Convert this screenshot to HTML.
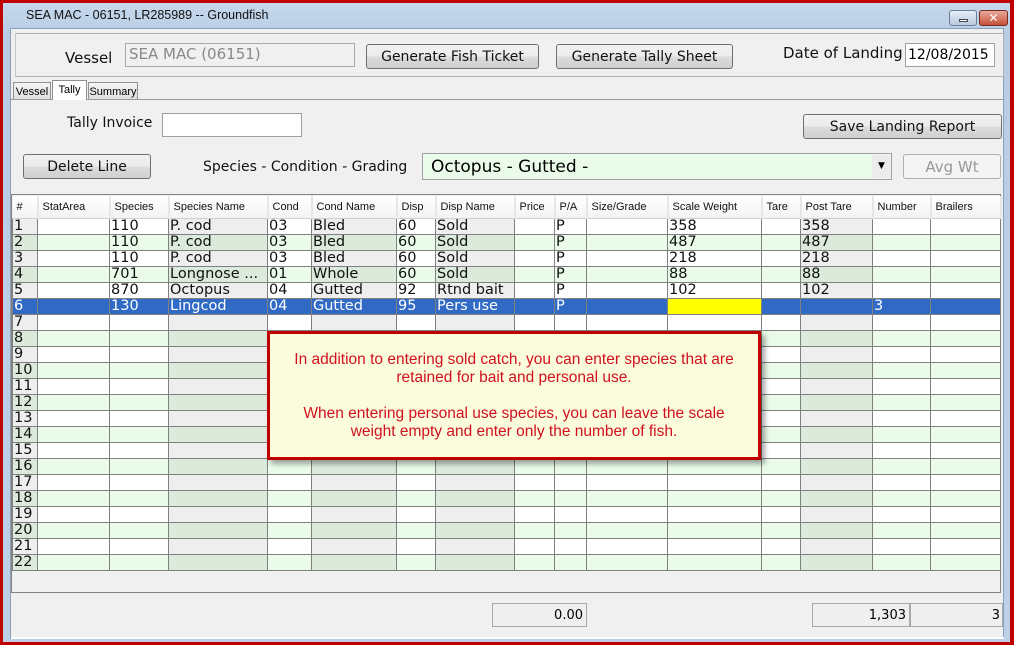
<!DOCTYPE html>
<html><head><meta charset="utf-8"><style>
*{margin:0;padding:0;box-sizing:border-box}
body{width:1014px;height:645px;overflow:hidden;background:#c00000;font-family:"DejaVu Sans","Liberation Sans",sans-serif;position:relative}
.a{position:absolute}
#frame{left:3px;top:3px;width:1007px;height:639px;background:linear-gradient(#c6d8ec,#b8cde4 30px,#bcd0e6)}
#client{left:10px;top:28px;width:994px;height:611px;background:#f0f0f0;border:1px solid #8aa0b8}
.lbl{font-size:14px;color:#111}
.btn{border:1px solid #707070;border-radius:3px;background:linear-gradient(#f2f2f2,#ebebeb 50%,#dcdcdc 50%,#cfcfcf);font-size:14px;text-align:center;color:#111}
.box{border:1px solid #a0a0a0;background:#fff}
table{border-collapse:collapse;table-layout:fixed;font-size:14.5px;color:#111}
td{border:1px solid #808080;height:16px;line-height:14px;padding:0 1px;white-space:nowrap;overflow:hidden;background:#fff}
td.r{background:#eee}
tr.g td{background:#eafbe9}
tr.g td.r{background:#dbeadb}
tr.s td{background:#316ac5;color:#fff}
tr.s td.y{background:#ff0;border:1px dotted #333}
th{font-weight:normal;font-family:"Liberation Sans",sans-serif;font-size:11px;text-align:left;padding:0 4px;height:22px;background:linear-gradient(#fff,#f3f3f3);border-right:2px solid #e6e6e6;border-bottom:1px solid #d0d0d0;color:#111}
.tab{font-family:"Liberation Sans",sans-serif;font-size:11px;border:1px solid #909090;border-bottom:none;background:linear-gradient(#f4f4f4,#e0e0e0);padding:3px 0 0 0;text-align:center}
</style></head><body>
<div class="a" id="frame"></div>
<div class="a" style="left:26px;top:8px;font-family:'Liberation Sans',sans-serif;font-size:12.5px;color:#111">SEA MAC - 06151, LR285989 -- Groundfish</div>
<div class="a" style="left:949px;top:10px;width:28px;height:16px;border:1px solid #6d7f96;border-radius:3px;background:linear-gradient(#e6eef8,#b9c9dd)"><div class="a" style="left:9px;top:8px;width:9px;height:3px;background:#fff;border:1px solid #445"></div></div>
<div class="a" style="left:979px;top:10px;width:29px;height:16px;border:1px solid #7a2b20;border-radius:3px;background:linear-gradient(#e9a99b,#c7503a);color:#fff;font-size:12px;font-weight:bold;text-align:center;line-height:15px">✕</div>
<div class="a" id="client"></div>
<div class="a" style="left:15px;top:33px;width:989px;height:44px;border:1px solid #b0b0b0;border-left-color:#c8c8c8"></div>
<div class="a lbl" style="left:65px;top:49px;font-size:15px">Vessel</div>
<div class="a" style="left:125px;top:43px;width:230px;height:24px;border:1px solid #a8a8a8;background:#f0f0f0;color:#888;font-size:15px;padding:1px 3px">SEA MAC (06151)</div>
<div class="a btn" style="left:366px;top:44px;width:173px;height:25px;line-height:24px">Generate Fish Ticket</div>
<div class="a btn" style="left:556px;top:44px;width:177px;height:25px;line-height:24px">Generate Tally Sheet</div>
<div class="a lbl" style="left:783px;top:44px;font-size:15px">Date of Landing</div>
<div class="a box" style="left:905px;top:43px;width:90px;height:24px;font-size:14px;padding:3px 2px">12/08/2015</div>
<div class="a" style="left:11px;top:99px;width:993px;height:1px;background:#9a9a9a"></div>
<div class="a tab" style="left:13px;top:82px;width:38px;height:17px">Vessel</div>
<div class="a tab" style="left:52px;top:80px;width:35px;height:20px;background:#fff;z-index:2">Tally</div>
<div class="a tab" style="left:88px;top:82px;width:50px;height:17px">Summary</div>
<div class="a lbl" style="left:67px;top:115px">Tally Invoice</div>
<div class="a box" style="left:162px;top:113px;width:140px;height:24px;border-color:#a0a0a0"></div>
<div class="a btn" style="left:803px;top:114px;width:199px;height:25px;line-height:24px">Save Landing Report</div>
<div class="a btn" style="left:23px;top:154px;width:128px;height:25px;line-height:24px">Delete Line</div>
<div class="a lbl" style="left:203px;top:159px">Species - Condition - Grading</div>
<div class="a" style="left:422px;top:153px;width:470px;height:27px;border:1px solid #a0a0a0;background:#eafbe9;font-size:17px;padding:3px 8px;color:#000">Octopus - Gutted -</div>
<div class="a" style="left:872px;top:155px;width:19px;height:23px;background:#ececec;font-size:9px;text-align:center;line-height:23px">▼</div>
<div class="a" style="left:903px;top:154px;width:98px;height:25px;border:1px solid #b0b0b0;border-radius:3px;background:#f4f4f4;color:#999;font-size:15px;text-align:center;line-height:24px">Avg Wt</div>
<div class="a" style="left:11px;top:194px;width:990px;height:399px;border:1px solid #828282;background:#f0f0f0"></div>
<table class="a" style="left:12px;top:196px;width:988px">
<colgroup><col style="width:25px"><col style="width:72px"><col style="width:59px"><col style="width:99px"><col style="width:44px"><col style="width:85px"><col style="width:39px"><col style="width:79px"><col style="width:40px"><col style="width:32px"><col style="width:81px"><col style="width:94px"><col style="width:39px"><col style="width:72px"><col style="width:58px"><col style="width:70px"></colgroup>
<tr><th>#</th><th>StatArea</th><th>Species</th><th>Species Name</th><th>Cond</th><th>Cond Name</th><th>Disp</th><th>Disp Name</th><th>Price</th><th>P/A</th><th>Size/Grade</th><th>Scale Weight</th><th>Tare</th><th>Post Tare</th><th>Number</th><th>Brailers</th></tr>
<tr><td class="r">1</td><td></td><td>110</td><td class="r">P. cod</td><td>03</td><td class="r">Bled</td><td>60</td><td class="r">Sold</td><td></td><td>P</td><td></td><td>358</td><td></td><td class="r">358</td><td></td><td></td></tr>
<tr class="g"><td class="r">2</td><td></td><td>110</td><td class="r">P. cod</td><td>03</td><td class="r">Bled</td><td>60</td><td class="r">Sold</td><td></td><td>P</td><td></td><td>487</td><td></td><td class="r">487</td><td></td><td></td></tr>
<tr><td class="r">3</td><td></td><td>110</td><td class="r">P. cod</td><td>03</td><td class="r">Bled</td><td>60</td><td class="r">Sold</td><td></td><td>P</td><td></td><td>218</td><td></td><td class="r">218</td><td></td><td></td></tr>
<tr class="g"><td class="r">4</td><td></td><td>701</td><td class="r">Longnose ...</td><td>01</td><td class="r">Whole</td><td>60</td><td class="r">Sold</td><td></td><td>P</td><td></td><td>88</td><td></td><td class="r">88</td><td></td><td></td></tr>
<tr><td class="r">5</td><td></td><td>870</td><td class="r">Octopus</td><td>04</td><td class="r">Gutted</td><td>92</td><td class="r">Rtnd bait</td><td></td><td>P</td><td></td><td>102</td><td></td><td class="r">102</td><td></td><td></td></tr>
<tr class="s"><td>6</td><td></td><td>130</td><td>Lingcod</td><td>04</td><td>Gutted</td><td>95</td><td>Pers use</td><td></td><td>P</td><td></td><td class="y"></td><td></td><td></td><td>3</td><td></td></tr>
<tr><td class="r">7</td><td></td><td></td><td class="r"></td><td></td><td class="r"></td><td></td><td class="r"></td><td></td><td></td><td></td><td></td><td></td><td class="r"></td><td></td><td></td></tr>
<tr class="g"><td class="r">8</td><td></td><td></td><td class="r"></td><td></td><td class="r"></td><td></td><td class="r"></td><td></td><td></td><td></td><td></td><td></td><td class="r"></td><td></td><td></td></tr>
<tr><td class="r">9</td><td></td><td></td><td class="r"></td><td></td><td class="r"></td><td></td><td class="r"></td><td></td><td></td><td></td><td></td><td></td><td class="r"></td><td></td><td></td></tr>
<tr class="g"><td class="r">10</td><td></td><td></td><td class="r"></td><td></td><td class="r"></td><td></td><td class="r"></td><td></td><td></td><td></td><td></td><td></td><td class="r"></td><td></td><td></td></tr>
<tr><td class="r">11</td><td></td><td></td><td class="r"></td><td></td><td class="r"></td><td></td><td class="r"></td><td></td><td></td><td></td><td></td><td></td><td class="r"></td><td></td><td></td></tr>
<tr class="g"><td class="r">12</td><td></td><td></td><td class="r"></td><td></td><td class="r"></td><td></td><td class="r"></td><td></td><td></td><td></td><td></td><td></td><td class="r"></td><td></td><td></td></tr>
<tr><td class="r">13</td><td></td><td></td><td class="r"></td><td></td><td class="r"></td><td></td><td class="r"></td><td></td><td></td><td></td><td></td><td></td><td class="r"></td><td></td><td></td></tr>
<tr class="g"><td class="r">14</td><td></td><td></td><td class="r"></td><td></td><td class="r"></td><td></td><td class="r"></td><td></td><td></td><td></td><td></td><td></td><td class="r"></td><td></td><td></td></tr>
<tr><td class="r">15</td><td></td><td></td><td class="r"></td><td></td><td class="r"></td><td></td><td class="r"></td><td></td><td></td><td></td><td></td><td></td><td class="r"></td><td></td><td></td></tr>
<tr class="g"><td class="r">16</td><td></td><td></td><td class="r"></td><td></td><td class="r"></td><td></td><td class="r"></td><td></td><td></td><td></td><td></td><td></td><td class="r"></td><td></td><td></td></tr>
<tr><td class="r">17</td><td></td><td></td><td class="r"></td><td></td><td class="r"></td><td></td><td class="r"></td><td></td><td></td><td></td><td></td><td></td><td class="r"></td><td></td><td></td></tr>
<tr class="g"><td class="r">18</td><td></td><td></td><td class="r"></td><td></td><td class="r"></td><td></td><td class="r"></td><td></td><td></td><td></td><td></td><td></td><td class="r"></td><td></td><td></td></tr>
<tr><td class="r">19</td><td></td><td></td><td class="r"></td><td></td><td class="r"></td><td></td><td class="r"></td><td></td><td></td><td></td><td></td><td></td><td class="r"></td><td></td><td></td></tr>
<tr class="g"><td class="r">20</td><td></td><td></td><td class="r"></td><td></td><td class="r"></td><td></td><td class="r"></td><td></td><td></td><td></td><td></td><td></td><td class="r"></td><td></td><td></td></tr>
<tr><td class="r">21</td><td></td><td></td><td class="r"></td><td></td><td class="r"></td><td></td><td class="r"></td><td></td><td></td><td></td><td></td><td></td><td class="r"></td><td></td><td></td></tr>
<tr class="g"><td class="r">22</td><td></td><td></td><td class="r"></td><td></td><td class="r"></td><td></td><td class="r"></td><td></td><td></td><td></td><td></td><td></td><td class="r"></td><td></td><td></td></tr>
</table>
<div class="a" style="left:267px;top:331px;width:494px;height:129px;border:3px solid #c00000;background:#fafcdc;box-shadow:4px 4px 5px rgba(0,0,0,.35);font-family:'Liberation Sans',sans-serif;font-size:15.5px;color:#d01020;text-align:center;line-height:18px;padding-top:17px">In addition to entering sold catch, you can enter species that are<br>retained for bait and personal use.<br><br>When entering personal use species, you can leave the scale<br>weight empty and enter only the number of fish.</div>
<div class="a" style="left:492px;top:603px;width:95px;height:24px;border:1px solid #a8a8a8;background:#efefef;font-size:13px;text-align:right;padding:4px 3px">0.00</div>
<div class="a" style="left:812px;top:603px;width:98px;height:24px;border:1px solid #a8a8a8;background:#efefef;font-size:13px;text-align:right;padding:4px 3px">1,303</div>
<div class="a" style="left:910px;top:603px;width:93px;height:24px;border:1px solid #a8a8a8;background:#efefef;font-size:13px;text-align:right;padding:4px 2px">3</div>
<div class="a" style="left:11px;top:637px;width:993px;height:2px;background:#fff"></div>
</body></html>
